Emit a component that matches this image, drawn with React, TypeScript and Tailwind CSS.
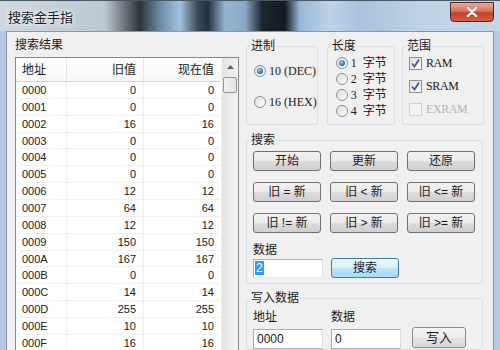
import type { ReactNode } from 'react'

const rows: [string, number, number][] = [
  ['0000', 0, 0],
  ['0001', 0, 0],
  ['0002', 16, 16],
  ['0003', 0, 0],
  ['0004', 0, 0],
  ['0005', 0, 0],
  ['0006', 12, 12],
  ['0007', 64, 64],
  ['0008', 12, 12],
  ['0009', 150, 150],
  ['000A', 167, 167],
  ['000B', 0, 0],
  ['000C', 14, 14],
  ['000D', 255, 255],
  ['000E', 10, 10],
  ['000F', 16, 16],
]

function Radio({ checked, children }: { checked?: boolean; children: ReactNode }) {
  return (
    <div className="flex items-center gap-[3px]">
      <span className="w-[12px] h-[12px] rounded-full border border-[#8e8f8f] bg-[linear-gradient(135deg,#dcdcdc,#ffffff)] flex items-center justify-center flex-shrink-0">
        {checked && (
          <span className="w-[6px] h-[6px] rounded-full bg-[radial-gradient(circle_at_40%_35%,#8fd0f5,#1f6aa8_70%,#0e3f6e)]" />
        )}
      </span>
      <span className="font-['Liberation_Serif','Noto_Sans_CJK_SC',serif] text-[12px] leading-[14px] text-[#1a1a1a] whitespace-pre">
        {children}
      </span>
    </div>
  )
}

function Check({ checked, disabled, children }: { checked?: boolean; disabled?: boolean; children: ReactNode }) {
  return (
    <div className="flex items-center gap-[4px] h-[13px]">
      <span
        className={
          disabled
            ? 'w-[13px] h-[13px] border border-[#cfcfcf] bg-[#f4f4f4] flex-shrink-0'
            : 'w-[13px] h-[13px] border border-[#8e8f8f] bg-[linear-gradient(135deg,#dedede,#ffffff)] flex items-center justify-center flex-shrink-0'
        }
      >
        {checked && (
          <svg width="11" height="11" viewBox="0 0 11 11">
            <path d="M2 5.5 L4.5 8.5 L9 1.5" fill="none" stroke="#3d5c9b" strokeWidth="1.8" />
          </svg>
        )}
      </span>
      <span
        className={
          disabled
            ? "font-['Liberation_Serif',serif] text-[12px] leading-[13px] tracking-[-0.4px] text-[#b0b0b0]"
            : "font-['Liberation_Serif',serif] text-[12px] leading-[13px] tracking-[-0.4px] text-[#1a1a1a]"
        }
      >
        {children}
      </span>
    </div>
  )
}

function Btn({ children, hot }: { children: ReactNode; hot?: boolean }) {
  return (
    <div
      className={
        hot
          ? 'h-[20px] w-[68px] rounded-[3px] border border-[#3c7fb1] bg-[linear-gradient(#eaf6fd_0%,#d9f0fc_50%,#bee6fd_50%,#a7d9f5_100%)] flex items-center justify-center text-[12px] text-[#1a1a1a]'
          : 'h-[20px] w-[68px] rounded-[3px] border border-[#707070] bg-[linear-gradient(#f2f2f2_0%,#ebebeb_50%,#dddddd_50%,#cfcfcf_100%)] flex items-center justify-center text-[12px] text-[#1a1a1a] whitespace-pre'
      }
    >
      {children}
    </div>
  )
}

function Group({ title, className, inner, children }: { title: string; className: string; inner: string; children: ReactNode }) {
  return (
    <fieldset className={`border border-[#d5dfe5] rounded-[3px] ${className}`}>
      <legend className="ml-[3px] px-[1px] text-[12px] leading-[14px] text-[#1a1a1a]">{title}</legend>
      <div className={inner}>{children}</div>
    </fieldset>
  )
}

export default function App() {
  return (
    <div className="w-[500px] h-[350px] overflow-hidden flex flex-col bg-[#b7cbe0] font-['Liberation_Sans','Noto_Sans_CJK_SC',sans-serif]">
      {/* title bar */}
      <div className="h-[31px] flex-shrink-0 flex items-start justify-between border-t border-[#4a5866] bg-[linear-gradient(90deg,#cfd8e0_0px,#bcc7d1_105px,#2d3339_140px,#6d8aa6_160px,#a3c2df_180px,#3a4856_198px,#23303c_208px,#94b4d2_225px,#8aa8c6_245px,#1c2631_262px,#141b22_285px,#9ab8d6_300px,#bcd3e8_330px,#a9c3dc_360px,#bcd2e6_420px,#c4d8ea_500px)]">
        <div className="pl-[8px] pt-[7px] text-[13px] text-[#1a1a1a] [text-shadow:0_0_6px_#fff,0_0_3px_#fff]">搜索金手指</div>
        <div className="mr-[6px] mt-[1px] w-[44px] h-[20px] rounded-b-[4px] border border-[#5a2620] bg-[linear-gradient(#e9a99b_0%,#d7725f_45%,#c2402a_55%,#d0604a_100%)] flex items-center justify-center">
          <svg width="12" height="10" viewBox="0 0 12 10">
            <path d="M2 1 L10 9 M10 1 L2 9" stroke="#fff" strokeWidth="2.4" strokeLinecap="round" />
          </svg>
        </div>
      </div>

      {/* frame + client */}
      <div className="flex-1 px-[6px] flex min-h-0">
        <div className="flex-1 bg-[#f0f0f0] border border-b-0 border-[#8798aa] flex text-[#1a1a1a] min-h-0">
          {/* left: results */}
          <div className="pl-[8px] pt-[5px] flex flex-col">
            <div className="h-[20px] text-[12px] leading-[14px] pt-[1px]">搜索结果</div>
            <div className="w-[224px] flex-1 border border-b-0 border-[#828790] bg-white flex overflow-hidden">
              <div className="flex-1 flex flex-col">
                <div className="h-[24px] flex-shrink-0 flex border-b border-[#d5d5d5] bg-[linear-gradient(#ffffff,#f6f7f8)] text-[12px]">
                  <div className="w-[51px] pl-[6px] flex items-center border-r border-[#e5e5e5]">地址</div>
                  <div className="w-[77px] pr-[7px] flex items-center justify-end border-r border-[#e5e5e5]">旧值</div>
                  <div className="w-[77px] pr-[7px] flex items-center justify-end">现在值</div>
                </div>
                {rows.map(([addr, oldV, curV]) => (
                  <div key={addr} className="h-[16.87px] flex-shrink-0 flex border-b border-[#f0f0f0] text-[11px] leading-[16px] text-[#202020]">
                    <div className="w-[51px] pl-[6px] border-r border-[#f0f0f0]">{addr}</div>
                    <div className="w-[77px] pr-[7px] text-right border-r border-[#f0f0f0]">{oldV}</div>
                    <div className="w-[77px] pr-[7px] text-right">{curV}</div>
                  </div>
                ))}
              </div>
              {/* scrollbar */}
              <div className="w-[17px] bg-[linear-gradient(90deg,#e3e3e3,#f3f3f3)] flex flex-col items-center border-l border-[#f0f0f0]">
                <div className="h-[18px] w-full flex items-center justify-center">
                  <svg width="7" height="4" viewBox="0 0 7 4">
                    <path d="M0 4 L3.5 0 L7 4 Z" fill="#606060" />
                  </svg>
                </div>
                <div className="mt-[1px] w-[14px] h-[16px] rounded-[2px] border border-[#959595] bg-[linear-gradient(90deg,#f2f2f2,#e2e2e2)]" />
              </div>
            </div>
          </div>

          {/* right: controls */}
          <div className="pl-[7px] pt-[7px] flex flex-col w-[245px]">
            <div className="flex h-[86px]">
              <Group title="进制" className="w-[68px] h-[86px]" inner="pl-[7px]">
                <div className="mt-[11px]">
                  <Radio checked>10 (DEC)</Radio>
                </div>
                <div className="mt-[17px]">
                  <Radio>16 (HEX)</Radio>
                </div>
              </Group>
              <Group title="长度" className="ml-[9px] w-[70px] h-[86px]" inner="pl-[8px]">
                <div className="mt-[3px] flex flex-col gap-[2px]">
                  <Radio checked>{'1  字节'}</Radio>
                  <Radio>{'2  字节'}</Radio>
                  <Radio>{'3  字节'}</Radio>
                  <Radio>{'4  字节'}</Radio>
                </div>
              </Group>
              <Group title="范围" className="ml-[7px] w-[84px] h-[86px]" inner="pl-[6px]">
                <div className="mt-[4px] flex flex-col gap-[10px]">
                  <Check checked>RAM</Check>
                  <Check checked>SRAM</Check>
                  <Check disabled>EXRAM</Check>
                </div>
              </Group>
            </div>

            <Group title="搜索" className="mt-[8px] w-[237px] h-[157px]" inner="pl-[6px]">
              <div className="mt-[4px] grid grid-cols-[68px_68px_68px] gap-x-[9px] gap-y-[11px]">
                <Btn>开始</Btn>
                <Btn>更新</Btn>
                <Btn>还原</Btn>
                <Btn>{'旧 = 新'}</Btn>
                <Btn>{'旧 < 新'}</Btn>
                <Btn>{'旧 <= 新'}</Btn>
                <Btn>{'旧 != 新'}</Btn>
                <Btn>{'旧 > 新'}</Btn>
                <Btn>{'旧 >= 新'}</Btn>
              </div>
              <div className="mt-[10px] text-[12px] leading-[14px]">数据</div>
              <div className="mt-[1px] flex gap-[8px] items-center">
                <div className="w-[70px] h-[19px] border border-[#abadb3] border-b-[#e3e9ef] border-r-[#dbdfe6] bg-white flex items-center pl-[1px]">
                  <span className="bg-[#3399ff] text-white text-[12px] leading-[14px] px-[1px]">2</span>
                </div>
                <Btn hot>搜索</Btn>
              </div>
            </Group>

            <Group title="写入数据" className="mt-[7px] w-[237px] h-[60px]" inner="pl-[6px]">
              <div className="flex gap-[8px] text-[12px] leading-[14px] mt-[5px]">
                <div className="w-[70px]">地址</div>
                <div className="w-[70px]">数据</div>
              </div>
              <div className="mt-[5px] flex gap-[8px] items-start">
                <div className="w-[70px] h-[20px] border border-[#abadb3] border-r-[#dbdfe6] bg-white text-[12px] leading-[18px] pl-[3px]">0000</div>
                <div className="w-[70px] h-[20px] border border-[#abadb3] border-r-[#dbdfe6] bg-white text-[12px] leading-[18px] pl-[3px]">0</div>
                <div className="ml-[3px] -mt-[2px] h-[21px] w-[54px] rounded-[3px] border border-[#8a8a8a] bg-[linear-gradient(#f4f4f4_0%,#ededed_50%,#e2e2e2_50%,#d9d9d9_100%)] flex items-center justify-center text-[13px]">写入</div>
              </div>
            </Group>
          </div>
        </div>
      </div>
    </div>
  )
}
